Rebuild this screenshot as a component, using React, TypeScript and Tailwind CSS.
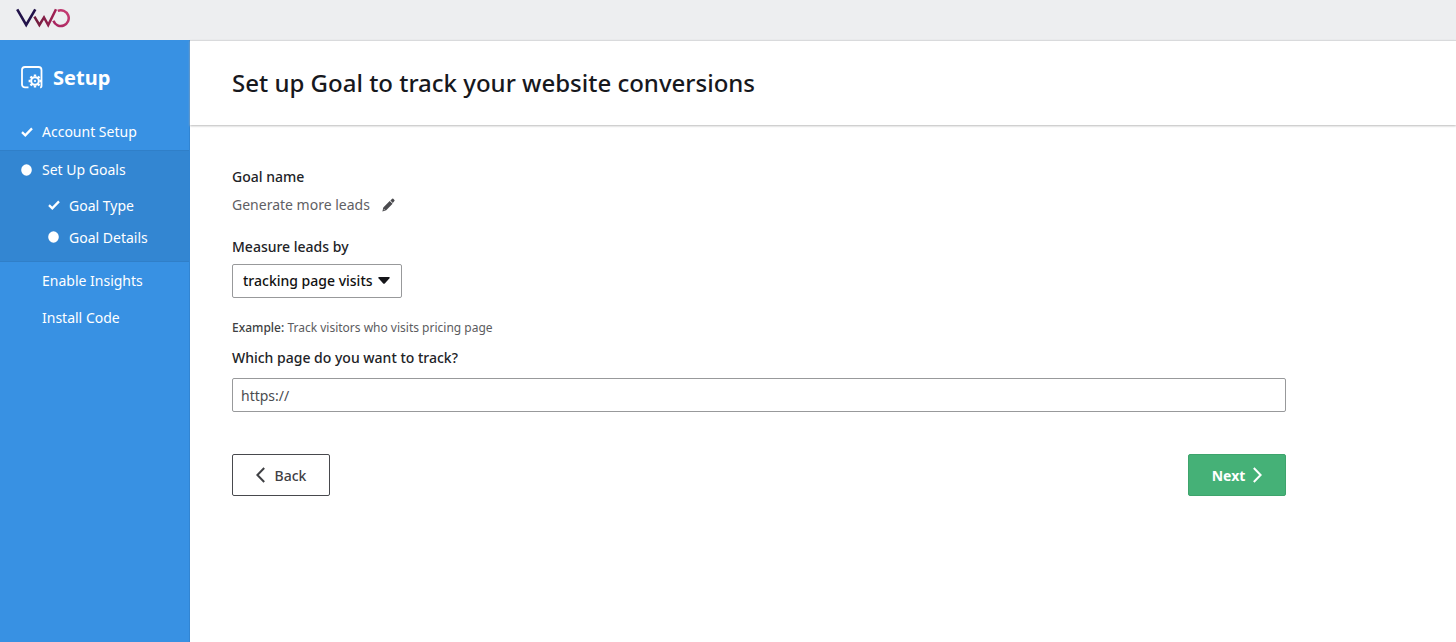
import React, { useState } from 'react';

const Logo = () => <svg width="54" height="20" viewBox="0 0 54 20" fill="none" role="img" aria-label="VWO">
    <defs>
      <linearGradient id="logo-w" x1="18" y1="0" x2="40" y2="0" gradientUnits="userSpaceOnUse">
        <stop stopColor="#6b1d3c" />
        <stop offset="1" stopColor="#a32155" />
      </linearGradient>
      <linearGradient id="logo-o" x1="36" y1="18" x2="54" y2="2" gradientUnits="userSpaceOnUse">
        <stop stopColor="#a3205c" />
        <stop offset="1" stopColor="#c93f75" />
      </linearGradient>
    </defs>
    <path d="M1.2 1.3 10.2 17 19.3 1.3" stroke="#22134a" strokeWidth="2.6" />
    <path d="M18.4 8.6 23.4 17 28 9.4 32.2 17 40 1.3" stroke="url(#logo-w)" strokeWidth="2.5" />
    <path d="M41.8 2.8A7.9 7.9 0 1 1 37.4 12.8" stroke="url(#logo-o)" strokeWidth="2.5" />
  </svg>;

const SetupIcon = () => <svg width="22" height="24" viewBox="0 0 22 24" fill="none" aria-hidden="true">
    <path d="M7.5 21.4H4a3 3 0 0 1-3-3V4a3 3 0 0 1 3-3h13.5a3 3 0 0 1 3 3v16a1.4 1.4 0 0 1-1.4 1.4" stroke="#fff" strokeWidth="1.8" />
    <circle cx="14" cy="15" r="3.8" stroke="#fff" strokeWidth="2" />
    <circle cx="14" cy="15" r="1.1" fill="#fff" />
    <path d="M14 8.6v2M14 19.4v2M7.6 15h2M18.4 15h2M9.5 10.5l1.4 1.4M18.5 10.5l-1.4 1.4M9.5 19.5l1.4-1.4M18.5 19.5l-1.4-1.4" stroke="#fff" strokeWidth="2.4" />
  </svg>;

const CheckIcon = () => <svg width="12" height="10" viewBox="0 0 12 10" fill="none" aria-hidden="true">
    <path d="M1 5.2 4.3 8.3 11 1.4" stroke="#fff" strokeWidth="2.3" />
  </svg>;

const DotIcon = () => <svg width="11" height="12" viewBox="0 0 11 12" aria-hidden="true">
    <ellipse cx="5.5" cy="6" rx="5.3" ry="5.8" fill="#fff" />
  </svg>;

const PencilIcon = () => <svg width="13" height="14" viewBox="0 0 13 14" fill="#4b4b4f" aria-hidden="true">
    <path d="M8.4 2.4 10.2.8q.5-.5 1.1 0l1.1 1.2q.5.6 0 1.1l-1.6 1.8z" />
    <path d="m7.7 2.9 2.9 2.9-6.4 6.5L.4 13.4 1.3 9.5zM2 11l-.4 1.2 1.2-.4z" fillRule="evenodd" />
  </svg>;

const steps = [{
  label: 'Account Setup',
  status: 'done',
  children: []
}, {
  label: 'Set Up Goals',
  status: 'current',
  children: [{
    label: 'Goal Type',
    status: 'done'
  }, {
    label: 'Goal Details',
    status: 'current'
  }]
}, {
  label: 'Enable Insights',
  status: 'todo',
  children: []
}, {
  label: 'Install Code',
  status: 'todo',
  children: []
}];

const StatusIcon = ({ status }: { status: string }) => <span className="w-3 flex shrink-0">
    {status === 'done' && <CheckIcon />}
    {status === 'current' && <DotIcon />}
  </span>;

const Sidebar = () => <aside className="w-[190px] shrink-0 bg-[#3891e3] border-r border-[#3285d2] text-white">
    <div className="flex items-center gap-2.5 px-[21px] pt-5 pb-[17px]">
      <SetupIcon />
      <h2 className="text-[20px] leading-9 font-bold">Setup</h2>
    </div>
    <nav>
      <ul className="text-[14px]">
        {steps.map(step => <li key={step.label} className={step.children.length ? 'bg-[#3386d2] border-y border-[#307fc8] pb-2' : ''}>
            <a href="#" className="flex items-center gap-[9px] h-[37px] px-[21px]">
              <StatusIcon status={step.status} />
              {step.label}
            </a>
            {step.children.length > 0 && <ul className="pt-px">
                {step.children.map(child => <li key={child.label}>
                    <a href="#" className="flex items-center gap-[9px] h-8 pl-12">
                      <StatusIcon status={child.status} />
                      {child.label}
                    </a>
                  </li>)}
              </ul>}
          </li>)}
      </ul>
    </nav>
  </aside>;

const GoalForm = () => {
  const [url, setUrl] = useState('https://');
  return <form className="max-w-[1096px] pl-[42px] pt-10 text-[14px] text-[#222327]" onSubmit={e => e.preventDefault()}>
      <h3 className="leading-6 font-medium">Goal name</h3>
      <div className="flex items-center gap-3 mt-1 text-[#5f6064]">
        <span className="leading-6">Generate more leads</span>
        <button type="button" aria-label="Edit goal name"><PencilIcon /></button>
      </div>

      <label htmlFor="measure" className="block mt-[18px] leading-6 font-medium">Measure leads by</label>
      <div className="relative mt-[5px] w-[170px]">
        <select id="measure" className="appearance-none w-full h-[34px] pl-[10px] pb-px border border-[#98999b] rounded-xs bg-white font-medium text-[#111]">
          <option>tracking page visits</option>
        </select>
        <svg className="absolute right-3 top-[13px] pointer-events-none" width="12" height="7" viewBox="0 0 12 7" aria-hidden="true">
          <path d="M.8 0h10.4q.8.5.3 1.2L6.8 6.4q-.8.8-1.6 0L.5 1.2Q0 .5.8 0z" fill="#16161a" />
        </svg>
      </div>

      <p className="mt-5 text-[12px] leading-5 text-[#5b5c60]">
        <span className="font-medium text-[#3e3f43]">Example:</span> Track visitors who visits pricing page
      </p>
      <label htmlFor="page" className="block mt-2 leading-6 font-medium">Which page do you want to track?</label>
      <input id="page" type="text" value={url} onChange={e => setUrl(e.target.value)} className="block w-full h-[34px] mt-2 px-2 border border-[#98999b] rounded-xs text-[#4b4c50]" />

      <div className="flex justify-between mt-[42px]">
        <button type="button" className="flex items-center justify-center gap-2.5 w-[98px] h-[42px] border border-[#48494d] rounded-xs font-medium text-[#3f4044]">
          <svg width="9" height="16" viewBox="0 0 9 16" fill="none" aria-hidden="true">
            <path d="M8.2 1 1.4 8l6.8 7" stroke="currentColor" strokeWidth="2" />
          </svg>
          Back
        </button>
        <button type="submit" className="flex items-center justify-center gap-2 w-[98px] h-[42px] border border-[#3ea46c] rounded-xs bg-[#45b177] font-bold text-white">
          Next
          <svg width="9" height="16" viewBox="0 0 9 16" fill="none" aria-hidden="true">
            <path d="M.8 1 7.6 8 .8 15" stroke="currentColor" strokeWidth="2" />
          </svg>
        </button>
      </div>
    </form>;
};

const App = () => {
  return <div className="min-h-screen flex flex-col bg-white font-['Noto_Sans',sans-serif]">
      <header className="h-10 shrink-0 flex items-start px-4 pt-2 bg-[#edeef0]">
        <Logo />
      </header>
      <div className="flex flex-1">
        <Sidebar />
        <main className="flex-1 min-w-0">
          <div className="h-[85px] flex items-center pl-[42px] border-t border-[#d9dadc] shadow-[0_1px_2px_#bbbbbb]">
            <h1 className="text-[24px] leading-8 font-medium text-[#17181d]">Set up Goal to track your website conversions</h1>
          </div>
          <GoalForm />
        </main>
      </div>
    </div>;
};
export default App;
